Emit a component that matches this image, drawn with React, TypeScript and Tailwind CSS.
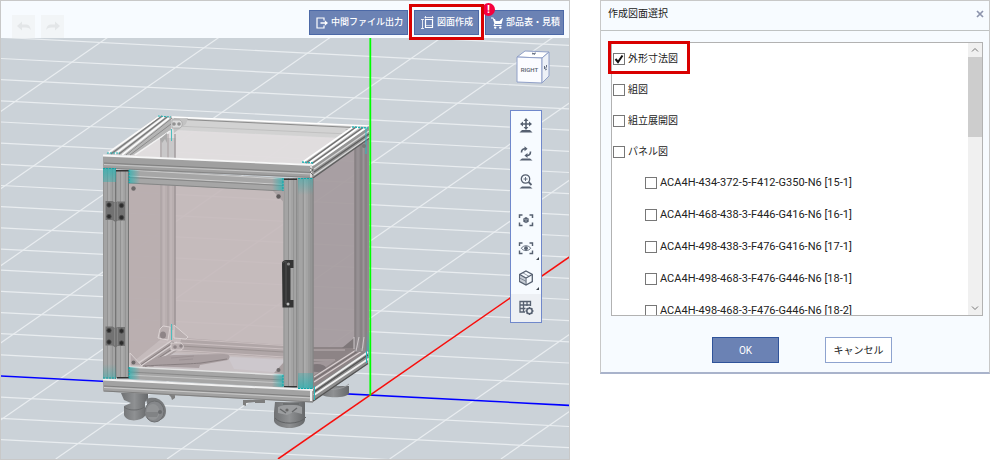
import { useState } from 'react';
import type { ReactNode } from 'react';

const drawings = [
  { id: 'outline', label: '外形寸法図' },
  { id: 'assembly', label: '組図' },
  { id: 'exploded', label: '組立展開図' },
  { id: 'panel', label: 'パネル図' },
];

const panels = [
  { id: 'p15-1', label: 'ACA4H-434-372-5-F412-G350-N6 [15-1]' },
  { id: 'p16-1', label: 'ACA4H-468-438-3-F446-G416-N6 [16-1]' },
  { id: 'p17-1', label: 'ACA4H-498-438-3-F476-G416-N6 [17-1]' },
  { id: 'p18-1', label: 'ACA4H-498-468-3-F476-G446-N6 [18-1]' },
  { id: 'p18-2', label: 'ACA4H-498-468-3-F476-G446-N6 [18-2]' },
];

function ExportIcon() {
  return (
    <svg viewBox="0 0 12 12" className="size-3 shrink-0" fill="none" stroke="currentColor" strokeWidth="1.2">
      <path d="M8 3.5V1H1v10h7V8.500" />
      <path d="M4.500 6H11" strokeWidth="1.500" />
      <path d="M8.800 3.200 12 6 8.800 8.800z" fill="currentColor" stroke="none" />
    </svg>
  );
}

function DrawingIcon() {
  return (
    <svg viewBox="0 0 13 13" className="size-[13px] shrink-0" fill="none" stroke="currentColor">
      <path d="M4.500 3.500h7v8h-7z" strokeWidth="1.200" />
      <path d="M3.500 1.500h9M4.500 0v2.500M11.500 0v2.500M1.500 3.500v9M0 3.500h3M0 12.500h3" strokeWidth=".8" />
      <path d="M4.500 9.500h7" strokeWidth=".6" />
    </svg>
  );
}

function CartIcon() {
  return (
    <svg viewBox="0 0 12 12" className="size-3 shrink-0" fill="currentColor">
      <path d="M0 .5h2.300l.7 1.500 1 0 .9 2.400h3.300L11.500 1 12 1.500 10.500 7H4.300l-.3 1h6.500v1H2.800l-.2-1 .8-1.500L1.700 1.500H0z" />
      <path d="M4 4h7l-.8 2.500H4.500z" />
      <circle cx="4.200" cy="10.600" r="1.200" />
      <circle cx="9.300" cy="10.600" r="1.200" />
    </svg>
  );
}

function HistoryIcon({ flip = false }: { flip?: boolean }) {
  return (
    <svg viewBox="0 0 16 12" className={flip ? 'h-3 w-4 -scale-x-100' : 'h-3 w-4'} fill="currentColor">
      <path d="M1 5 6 0.500V3.500h3.500c3.500 0 5 2 5.200 5.500C13.500 7.200 12 6.500 9.500 6.500H6v3z" />
    </svg>
  );
}

const toolIcons: Record<string, ReactNode> = {
  pan: (
    <>
      <path d="M8 1.500v9M3.500 6h9" strokeWidth="1.600" />
      <path d="M8 0 5.600 3h4.800zM8 12 5.600 9h4.800zM2 6l3-2.400v4.800zM14 6l-3-2.400v4.800z" fill="currentColor" stroke="none" />
      <path d="M4 12h8l2.500 2.500h-13z" fill="currentColor" stroke="none" />
    </>
  ),
  rotate: (
    <>
      <path d="M3.500 6.500C3.500 4 5 2.700 7 2.700M12.500 5.500c0 2.500-1.300 4-3.500 4" strokeWidth="1.600" />
      <path d="M6.500.2v5L9.600 2.700zM9.500 7v5L6.400 9.500z" fill="currentColor" stroke="none" />
      <path d="M4 12.500h8l2.500 2h-13z" fill="currentColor" stroke="none" />
    </>
  ),
  zoom: (
    <>
      <circle cx="7.500" cy="5" r="4.200" strokeWidth="1.300" />
      <path d="M7.500 3v4M5.500 5h4" strokeWidth=".9" />
      <path d="m10.500 8 3 3" strokeWidth="1.800" />
      <path d="M4 12.500h8l2.500 2h-13z" fill="currentColor" stroke="none" />
    </>
  ),
  fit: (
    <>
      <path d="M4.500 3h-3v3M11.500 3h3v3M4.500 13.500h-3v-3M11.500 13.500h3v-3" strokeWidth="1.500" />
      <path d="m8 5 2.700 1.500v3.200L8 11.200 5.300 9.700V6.500z" fill="currentColor" stroke="none" />
      <path d="m5.800 6.800 2.200 1.200 2.200-1.200M8 8v2.800" stroke="#cfd5de" strokeWidth=".5" />
    </>
  ),
  look: (
    <>
      <path d="M4.500 3h-3v3M11.500 3h3v3M4.500 13.500h-3v-3M11.500 13.500h3v-3" strokeWidth="1.400" />
      <path d="M3.300 8.200C5.500 5 10.500 5 12.700 8.200 10.500 11.400 5.500 11.400 3.300 8.200z" strokeWidth=".9" />
      <circle cx="8" cy="8.200" r="1.900" fill="currentColor" stroke="none" />
    </>
  ),
  cube: (
    <>
      <path d="m8 1 6.300 3.500v7L8 15l-6.300-3.500v-7z" strokeWidth="1.300" />
      <path d="M1.700 4.500 8 8l6.300-3.500M8 8v7" strokeWidth="1.100" />
      <path d="M4 5.800v7M6 6.900v7M1.700 8 8 11.300M4.800 2.800 11 6.300" strokeWidth=".6" />
    </>
  ),
  grid: (
    <>
      <path d="M7 12H2V1.500h10.500V6M2 5h10.500M2 8.500h5.500M5.500 1.500V12M9 1.500V6" strokeWidth="1.300" />
      <circle cx="11.500" cy="11" r="2.700" strokeWidth="1.500" />
      <path d="M11.500 7v1.500M11.500 13.500V15M7.500 11H9M14 11h1.500M8.700 8.200l1 1M13.300 12.800l1 1M8.700 13.800l1-1M13.300 9.200l1-1" strokeWidth="1.300" />
    </>
  ),
};

function ToolButton({ name, label, menu = false, className = '' }: { name: string; label: string; menu?: boolean; className?: string }) {
  return (
    <button type="button" aria-label={label} className={`relative flex h-7 w-full items-center justify-center text-[#566070] ${className}`}>
      <svg viewBox="0 0 16 16" className="size-4" fill="none" stroke="currentColor">
        {toolIcons[name]}
      </svg>
      {menu && (
        <svg viewBox="0 0 3 3" className="absolute right-0.5 bottom-0.5 size-[3px]" fill="#3f4650">
          <path d="M3 0v3H0z" />
        </svg>
      )}
    </button>
  );
}

function FloorGrid() {
  const rows = Array.from({ length: 21 }, (_, i) => 376 + (i - 17) * 21.17);
  const columns = Array.from({ length: 12 }, (_, i) => 55.7 + (i - 6) * 111.3);
  return (
    <g stroke="#e9edf0" strokeWidth="1.200">
      {rows.map((y) => (
        <line key={y} x1="0" y1={y} x2="570" y2={y + 29.4} />
      ))}
      {columns.map((x) => (
        <line key={x} x1={x} y1="459" x2={x + 609} y2="37" />
      ))}
    </g>
  );
}

function Hinge({ y }: { y: number }) {
  return (
    <g transform={`translate(105.500 ${y})`}>
      <path d="M0 0h7l2.500 1.500L12 .5h7.500v19H12l-2 1.500-3-2H0z" fill="#727272" />
      <path d="M9 2v17M12 1v18" stroke="#858585" strokeWidth="1" />
      <g fill="#2c2c2c" stroke="#4c4c4c" strokeWidth=".8">
        <circle cx="3.500" cy="4" r="2.200" />
        <circle cx="16" cy="4.500" r="2.200" />
        <circle cx="3.500" cy="15.500" r="2.200" />
        <circle cx="16" cy="16.500" r="2.200" />
      </g>
    </g>
  );
}

function Post({ x, top, bottom, width }: { x: number; top: number; bottom: number; width: number }) {
  return (
    <g>
      <rect x={x} y={top} width={width} height={bottom - top} fill="#a4a4a4" />
      <path d={`M${x + 0.5} ${top}V${bottom}`} stroke="#949494" />
      <path d={`M${x + width * 0.36} ${top}V${bottom}`} stroke="#8a8a8a" strokeWidth=".8" />
      <path d={`M${x + width * 0.46} ${top}V${bottom}`} stroke="#b3b3b3" />
      <path d={`M${x + width * 0.72} ${top}V${bottom}`} stroke="#8e8e8e" strokeWidth=".8" />
      <path d={`M${x + width - 0.5} ${top}V${bottom}`} stroke="#757575" />
    </g>
  );
}

function Cabinet() {
  return (
    <g>
      <defs>
        <linearGradient id="tealDown" x2="0" y2="1">
          <stop offset="0" stopColor="#27b3b3" stopOpacity=".75" />
          <stop offset="1" stopColor="#27b3b3" stopOpacity="0" />
        </linearGradient>
        <linearGradient id="tealUp" y1="1" x2="0" y2="0">
          <stop offset="0" stopColor="#27b3b3" stopOpacity=".75" />
          <stop offset="1" stopColor="#27b3b3" stopOpacity="0" />
        </linearGradient>
        <linearGradient id="tealRight">
          <stop offset="0" stopColor="#27b3b3" stopOpacity=".75" />
          <stop offset="1" stopColor="#27b3b3" stopOpacity="0" />
        </linearGradient>
        <linearGradient id="tealLeft" x1="1" x2="0">
          <stop offset="0" stopColor="#27b3b3" stopOpacity=".75" />
          <stop offset="1" stopColor="#27b3b3" stopOpacity="0" />
        </linearGradient>
        <linearGradient id="rubber">
          <stop offset="0" stopColor="#6f7173" />
          <stop offset=".5" stopColor="#8f9193" />
          <stop offset="1" stopColor="#66686a" />
        </linearGradient>
      </defs>

      {/* rear caster */}
      <path d="M318 386h31v7c0 5-24 6-28 1z" fill="url(#rubber)" />
      <path d="M318 387c8 4 25 3 31-3" stroke="#9a9c9e" fill="none" />

      {/* glass */}
      <path d="M116 155 170 118 369 128 313 166z" fill="#e3e1e2" fillOpacity=".9" />
      <path d="M120 160 176 130 342 138 306 164z" fill="#e0dcdd" fillOpacity=".7" />
      <path d="M128 180h156v200l-156-8z" fill="#c4b8b9" fillOpacity=".9" />
      <path d="M128 180h32v160l-32 26z" fill="#b5abac" fillOpacity=".75" />
      <path d="M313 178 369 138V352L313 388z" fill="#a59b9e" fillOpacity=".93" />

      {/* back left post */}
      <path d="M160 138h15.500v30H160z" fill="#c9c8c9" />
      <path d="M160 182h15.500v148H160z" fill="#b9afb0" />
      <path d="M161 138v30M168 134v34M161 182v150M168 182v148" stroke="#a79e9f" />
      <path d="M164 182v148M171 182v148" stroke="#c5bbbc" />
      <path d="M175 134v34M175 184v149" stroke="#8e8688" />
      <path d="M171.500 129v12M171.500 324v16" stroke="#4cbcbd" />

      {/* interior floor */}
      <path d="M182 338 284 345v13l-108-7z" fill="#b0a6a7" />
      <path d="M182 339 284 345.500M180 343l104 6M177 350l107 7" stroke="#cabfc0" />
      <path d="M180 346l104 6" stroke="#948b8c" strokeWidth=".8" />
      <path d="M170 353 284 359v16l-139-8z" fill="#c9c2c5" />
      <path d="M228 357 284 360v13l-50-4z" fill="#cdc8cd" />
      <path d="M136 366 172 341l9 7-28 19z" fill="#aaa1a2" />
      <path d="m137 364 34-23M141 366l36-24M148 366l31-19" stroke="#d8d0d1" strokeWidth="1.400" />
      <path d="m139 366 35-24M145 367l33-22" stroke="#847c7d" strokeWidth=".9" />
      <path d="M143 366c6-6 16-10 31-11l50-1c6 0 7 3 4 6l-28 5-1 3-50-2z" fill="#a99fa1" />
      <path d="M143 366c18-1 48-2 58-3l26-4" stroke="#887f81" fill="none" />
      <path d="m171 358 23-2M179 360l14-1" stroke="#978d8f" strokeWidth=".7" />
      <g fill="#b9afb0" stroke="#e2dbdb" strokeWidth=".8">
        <path d="m160 329 3-3 7 1-2 13-10-2z" />
        <path d="m174 325 14 12-2 2-12-1z" />
        <path d="M171 343h10c3 2 3 6 0 7h-10z" />
      </g>
      <g fill="#8e8587">
        <ellipse cx="163" cy="335" rx="3" ry="3.500" />
        <circle cx="175" cy="347" r="1.800" />
        <circle cx="181" cy="346" r="1.800" />
      </g>
      <path d="M130 353 142 366h-12z" fill="#b4a9ab" stroke="#ded8d8" strokeWidth=".8" />
      <path d="m274 373 10-11v12z" fill="#a89e9f" />

      {/* right side floor */}
      <path d="M313 347h36l20-2v8l-56 35z" fill="#8d8486" />
      <path d="M313 350h32M313 360h22" stroke="#bcb1b3" />
      <path d="m313 362 23-2-23 16z" fill="#a1979a" />
      <ellipse cx="317" cy="368" rx="9" ry="4" fill="#7f777a" />
      <path d="m314 377 50-32M314 382l51-33" stroke="#d9d0d1" strokeWidth="1.400" />
      <path d="m314 379.500 51-33" stroke="#746c6e" />

      {/* back right post */}
      <path d="M354.500 146 369 135v217h-14.500z" fill="#918b8e" />
      <path d="M355 146v202M361 143v205M366 139v212" stroke="#807a7d" />
      <path d="M358 145v203M363.500 141v207" stroke="#9b9598" />
      <path d="M366.500 330h3v28h-3z" fill="url(#tealUp)" />
      <path d="m342 348 12-10v10z" fill="#7e7779" />
      <path d="M354 337v12M359 337l-3 14M364 337l-2 14" stroke="#d4ced0" strokeWidth=".9" />

      {/* top frame, back beam */}
      <path d="M168 116 369 125.500V133l-28 5-166-8z" fill="#d2d2d2" />
      <path d="m172 117 197 9" stroke="#fff" strokeWidth="1.500" />
      <path d="m174 119 190 9" stroke="#8c8c8c" />
      <path d="m176 126 172 8" stroke="#c0c0c0" />
      <path d="m172 119 2 14 12-9 2-6z" fill="#c2c2c2" />
      <path d="M172 120h8c3 2 3 6 0 8h-8z" fill="#dcdcdc" stroke="#a7a7a7" strokeWidth=".8" />
      <circle cx="174" cy="124" r="1.800" fill="#929292" />
      <circle cx="179" cy="124" r="1.800" fill="#929292" />
      <path d="M345 129h14l-5 7z" fill="#b5b5b5" />

      {/* top frame, left beam */}
      <path d="M127 155 171 118v12l-38 25z" fill="#b5b5b5" />
      <path d="m130 155 41-31" stroke="#8c8c8c" />
      <path d="m135 155 35-24" stroke="#f3f3f3" strokeWidth="1.500" />
      <path d="M106 154 158 116l14 1-45 38z" fill="#bcbcbc" />
      <path d="m108 153 52-37M115 154l49-37M122 155l47-37" stroke="#fafafa" strokeWidth="1.800" />
      <path d="m111 154 51-38M119 154l48-37" stroke="#777" strokeWidth="1.100" />
      <path d="m126 155 46-37" stroke="#8a8a8a" />
      <path d="m158 116 13 1M107 153h13" stroke="#20b4b5" strokeDasharray="2 1" />
      <path d="m160 139 7-6v10l-2-4-3 4z" fill="#aaa" />

      {/* top frame, right beam */}
      <path d="M312 164 369 126v12.500L313 178z" fill="#959595" />
      <path d="m314 169 55-38M314 175l55-38" stroke="#d8d8d8" strokeWidth="1.300" />
      <path d="m314 172 55-38M313 178l56-39.500" stroke="#5e5e5e" strokeWidth="1.300" />
      <path d="M302 163 352 127l17-.5L313 165z" fill="#bdbdbd" />
      <path d="m303 162 50-35M309 163l50-36M313 165l54-38" stroke="#fff" strokeWidth="1.800" />
      <path d="m306 163 50-36M312 163.500l51-36" stroke="#6e6e6e" strokeWidth="1.200" />
      <path d="m352 127 16 1M302 162l12 1" stroke="#20b4b5" strokeDasharray="2 1" strokeWidth="1.500" />
      <path d="M366 127v27" stroke="#35bbbc" />
      <circle cx="364" cy="146" r="2" fill="#787878" />

      {/* front posts */}
      <Post x={103} top={168} bottom={379} width={13} />
      <Post x={116} top={170} bottom={378} width={13} />
      <Post x={283.5} top={178} bottom={387} width={14} />
      <Post x={297.5} top={178} bottom={389} width={16} />
      <path d="M311 178v210" stroke="#858585" />
      <path d="M116 170h13v1.500h-13zM284 178.500h13v1.500h-13zM117 377h12v1.500h-12zM284 386h13v1.500h-13z" fill="#333" />

      {/* door rails */}
      <path d="m129 169 154.500 9v13L129 183.500z" fill="#a6a6a6" />
      <path d="m129 170 154 9M129 176l154 8.500" stroke="#cbcbcb" />
      <path d="m129 177.500 154 8M129 183l154 8" stroke="#868686" />
      <path d="m129 366.500 154.500 8v13L129 379z" fill="#a6a6a6" />
      <path d="m129 367 154 8" stroke="#e3e3e3" strokeWidth="1.500" />
      <path d="m129 372 154 8" stroke="#8a8a8a" />
      <path d="m129 375 154 8" stroke="#c5c5c5" />
      <circle cx="133.500" cy="188.500" r="2.200" fill="#6d696a" />
      <path d="m273 191 10.500 1v10z" fill="#aaa3a4" />
      <circle cx="278.500" cy="196.500" r="2.200" fill="#5e5a5b" />
      <circle cx="133.500" cy="362.500" r="2" fill="#6d696a" />
      <circle cx="278.500" cy="370" r="2" fill="#6d696a" />

      {/* front top beam */}
      <path d="M103 155 313 164.500V178L103 168.500z" fill="#a0a0a0" />
      <path d="m103 155.500 210 9.500" stroke="#f7f7f7" strokeWidth="1.800" />
      <path d="m104 163 208 9.500" stroke="#808080" />
      <path d="m104 164.500 208 9.500" stroke="#c7c7c7" />
      <path d="m104 168 209 9.500" stroke="#868686" />
      <path d="M311 165v12.500" stroke="#dcdcdc" strokeWidth="2" />
      <path d="m310 168 3 2-3 2 3 3" stroke="#555" fill="none" strokeWidth=".8" />

      {/* casters */}
      <path d="M121 393h27v6l-3 3v14c-5 6-19 6-21-1v-9l7-3-7-3z" fill="url(#rubber)" />
      <path d="M124 407c4 4 16 4 20 0" stroke="#6b6d6f" fill="none" />
      <path d="M146 399c14-5 20 6 20 12 0 9-9 12-15 8z" fill="#77797b" />
      <ellipse cx="154.500" cy="411.500" rx="9.500" ry="10.500" fill="#85878a" stroke="#6c6e70" />
      <ellipse cx="153" cy="412" rx="6.500" ry="8" fill="#919395" />
      <path d="M145 412h14l-2 5h-11z" fill="#818385" />
      <circle cx="160" cy="412" r="2" fill="#6a6c6e" />
      <path d="M168 394h7v4l-3 2-1-3zM243 400h22v3h-10v-1l-9 1v3l-3-1z" fill="#7e7e7e" />
      <path d="M275 402h30v18c-1 10-28 11-31 1v-9z" fill="url(#rubber)" />
      <path d="M278 407c7-3 18-3 24 0v7l-8-2-7 3-9-2z" fill="#9b9d9f" />
      <path d="m280 409 6 4M297 408l-5 4M283 404h16" stroke="#66686a" strokeWidth="1.400" />
      <circle cx="287" cy="410" r="1.600" fill="#676767" />
      <path d="M275 418c5 7 25 7 31-1" stroke="#606264" fill="none" />

      {/* base beams */}
      <path d="M312 388 368 350v13.500L313 402z" fill="#8d8d8d" />
      <path d="m314 389 54-37M314 395l54-36" stroke="#f1f1f1" strokeWidth="2" />
      <path d="m314 392 54-37M313 401l55-37.500" stroke="#535353" strokeWidth="1.300" />
      <path d="M103 378.500 313 389v13.500L103 391.500z" fill="#a2a2a2" />
      <path d="m103 379.500 210 10.500" stroke="#f1f1f1" strokeWidth="2" />
      <path d="m104 386 208 10.500" stroke="#808080" />
      <path d="m104 387.500 208 10.500" stroke="#cacaca" />
      <path d="m104 391 209 11" stroke="#7e7e7e" />
      <path d="M311 391v10" stroke="#eee" strokeWidth="2" />
      <path d="M314.500 386v14M366.500 351v12" stroke="#2ab7b8" />

      {/* highlighted joints */}
      <path d="M103 168.500h13V182h-13zM298 178h15v17h-15z" fill="url(#tealDown)" />
      <path d="M103 364h13v14.500h-13zM298 373h15v15.500h-15z" fill="url(#tealUp)" />
      <path d="M129 169.500l11 .7v13.500l-11-.5zM129 367l11 .5V380l-11-1z" fill="url(#tealRight)" />
      <path d="m272 177.500 11.500.5v12.500l-11.500-.5zM272 374l11.500.5V387l-11.500-.5z" fill="url(#tealLeft)" />
      <path d="M103 168.500h13M129 170v13M283 178v13M298 178.500h15M103 378h13M129 367v12M283 375v12M298 388.500h15" stroke="#0da7aa" strokeDasharray="2 1" />

      <Hinge y={201} />
      <Hinge y={326.5} />

      {/* handle */}
      <path d="m282 262 3-2h8.500v8h-3v32h3v7.500h-11z" fill="#343434" />
      <path d="m282 263 4-2v43" stroke="#505050" fill="none" />
      <circle cx="288.500" cy="264" r="1.600" fill="#8a8a8a" />
      <circle cx="288" cy="304" r="1.500" fill="#bbb" />
    </g>
  );
}

function Scene() {
  return (
    <svg viewBox="1 38 568 421" className="block w-full bg-[#cbd2d8]" role="img" aria-label="3Dモデル">
      <FloorGrid />
      <path d="m0 376 570 29.400" stroke="#00f" strokeWidth="1.600" />
      <Cabinet />
      <path d="M278 459 570 256.500" stroke="#f4100e" strokeWidth="1.600" />
      <path d="M370.300 38v357.500" stroke="#0f0" strokeWidth="1.800" />
    </svg>
  );
}

function ViewCube() {
  return (
    <svg viewBox="0 0 34 34" className="absolute top-[49px] right-[19px] size-[34px]" stroke="#90a0c8" strokeWidth="1" aria-hidden="true">
      <path d="M1 7 9 1l24 1-7 6z" fill="#fff" />
      <path d="M1 7 26 8v25L1 32z" fill="#fbfcff" />
      <path d="m26 8 7-6v24l-7 7z" fill="#edf1f7" />
      <path d="m16 4 4-1M16 3l3 1.500M28.500 16v3l2-2v-2M29 20l2-1" stroke="#667083" fill="none" />
      <text x="13.500" y="22" textAnchor="middle" fontSize="6" fill="#59616e" stroke="none" className="font-['Roboto',sans-serif] font-medium">RIGHT</text>
    </svg>
  );
}

function CheckRow({ id, label, checked, onToggle, nested = false }: { id: string; label: string; checked: boolean; onToggle: () => void; nested?: boolean }) {
  return (
    <li className={nested ? 'flex h-8 shrink-0 items-center pl-8' : 'flex h-[31px] shrink-0 items-center'}>
      <span className="relative mr-[3px] ml-px size-3 shrink-0">
        <input
          id={id}
          type="checkbox"
          checked={checked}
          onChange={onToggle}
          className="peer block size-3 appearance-none border border-[#777] bg-white"
        />
        <svg viewBox="0 0 12 12" className="pointer-events-none absolute inset-0 hidden size-3 peer-checked:block" fill="none" stroke="#111" strokeWidth="2">
          <path d="m2.500 6 2.500 3 4.500-6.500" />
        </svg>
      </span>
      <label htmlFor={id} className={nested ? 'text-[11px] whitespace-nowrap' : 'text-[10px] whitespace-nowrap'}>
        {label}
      </label>
    </li>
  );
}

function Viewer() {
  const button = 'flex h-[25px] items-center border border-[#4c69a7] bg-[#6b82b4] text-[9px] font-medium whitespace-nowrap text-white';
  return (
    <section className="relative border border-[#c8c8c8]">
      <header className="flex h-[37px] items-start justify-between bg-[#f7fbff] pr-[5px] pl-[11px]">
        <div className="flex gap-1.5 pt-3.5 text-[#e3e6e8]">
          <button type="button" aria-label="元に戻す" className="flex h-[23px] w-[23px] items-center justify-center bg-[#f2f5f7]">
            <HistoryIcon />
          </button>
          <button type="button" aria-label="やり直し" className="flex h-[23px] w-[23px] items-center justify-center bg-[#f2f5f7]">
            <HistoryIcon flip />
          </button>
        </div>
        <div className="flex gap-1.5 pt-[9px]">
          <button type="button" className={`${button} w-[99px] gap-[3px] pl-1.5`}>
            <ExportIcon />
            中間ファイル出力
          </button>
          <div className="relative">
            <button type="button" className={`${button} w-[65px] gap-[3px] pl-1.5`}>
              <DrawingIcon />
              図面作成
            </button>
            <span className="pointer-events-none absolute -inset-x-[5px] -top-1.5 -bottom-[5px] z-10 border-3 border-[#d90000]" />
          </div>
          <div className="relative">
            <button type="button" className={`${button} w-[79px] gap-[3px] pl-[5px]`}>
              <CartIcon />
              部品表・見積
            </button>
            <span className="absolute -top-[7px] -left-[3px] flex size-[13px] items-center justify-center rounded-full bg-[#f5003d] text-[11px] leading-none font-bold text-white">!</span>
          </div>
        </div>
      </header>
      <Scene />
      <ViewCube />
      <div role="toolbar" aria-label="表示" aria-orientation="vertical" className="absolute top-[109px] right-[27px] flex w-8 flex-col border border-[#7088cb] bg-[#f7fbff] pt-px">
        <ToolButton name="pan" label="移動" />
        <ToolButton name="rotate" label="回転" />
        <ToolButton name="zoom" label="拡大" className="mb-2.5" />
        <ToolButton name="fit" label="全体表示" />
        <ToolButton name="look" label="表示切替" menu className="mb-0.5" />
        <ToolButton name="cube" label="表示形式" menu className="mb-0.5" />
        <ToolButton name="grid" label="グリッド設定" className="bg-[#edf0f4]" />
      </div>
    </section>
  );
}

function DrawingDialog() {
  const [selected, setSelected] = useState<string[]>(['outline']);

  const toggle = (id: string) => {
    setSelected((prev) => (prev.includes(id) ? prev.filter((item) => item !== id) : [...prev, id]));
  };

  return (
    <section role="dialog" aria-labelledby="dialog-title" className="border border-b-2 border-[#c8c8c8] border-b-[#a9b3cb] bg-[#f7fbff]">
      <header className="flex h-[30px] items-center justify-between border-b border-[#bfc2c2] pr-[5px] pb-1 pl-[7px]">
        <h2 id="dialog-title" className="text-[10px]">作成図面選択</h2>
        <button type="button" aria-label="閉じる" className="flex size-2 items-center justify-center text-[#8d94ad]">
          <svg viewBox="0 0 8 8" className="size-2" fill="none" stroke="currentColor" strokeWidth="1.700">
            <path d="m1 1 6 6M7 1 1 7" />
          </svg>
        </button>
      </header>

      <div className="relative mt-[11px] mr-1.5 ml-2.5">
        <div className="flex h-[274px] border border-[#b2b2b2] bg-white">
          <ul className="flex min-w-0 flex-1 flex-col overflow-hidden">
            {drawings.map((item) => (
              <CheckRow key={item.id} {...item} checked={selected.includes(item.id)} onToggle={() => toggle(item.id)} />
            ))}
            {panels.map((item) => (
              <CheckRow key={item.id} {...item} checked={selected.includes(item.id)} onToggle={() => toggle(item.id)} nested />
            ))}
          </ul>
          <div className="flex w-3.5 flex-col bg-[#f0f0f0] text-[#777]" aria-hidden="true">
            <svg viewBox="0 0 14 14" className="size-3.5" fill="none" stroke="currentColor">
              <path d="m4 8.500 3-3 3 3" />
            </svg>
            <div className="h-20 bg-[#cdcdcd]" />
            <svg viewBox="0 0 14 14" className="mt-auto size-3.5" fill="none" stroke="currentColor">
              <path d="m4 5.500 3 3 3-3" />
            </svg>
          </div>
        </div>
        <span className="pointer-events-none absolute -top-px -left-[3px] h-[33px] w-[82px] border-3 border-[#d90000]" />
      </div>

      <footer className="flex justify-center gap-[46px] pt-[21px] pb-[9px] pl-3.5 text-[10px]">
        <button type="button" className="h-[26px] w-[67px] border border-[#2f539a] bg-[#6b82b4] text-white">OK</button>
        <button type="button" className="h-[26px] w-[67px] border border-[#8ea3cf] bg-white whitespace-nowrap">キャンセル</button>
      </footer>
    </section>
  );
}

export default function App() {
  return (
    <main className="grid grid-cols-[57fr_39fr] items-start gap-[30px] bg-white font-['Roboto','Noto_Sans_CJK_JP',sans-serif] text-[#222]">
      <Viewer />
      <DrawingDialog />
    </main>
  );
}
